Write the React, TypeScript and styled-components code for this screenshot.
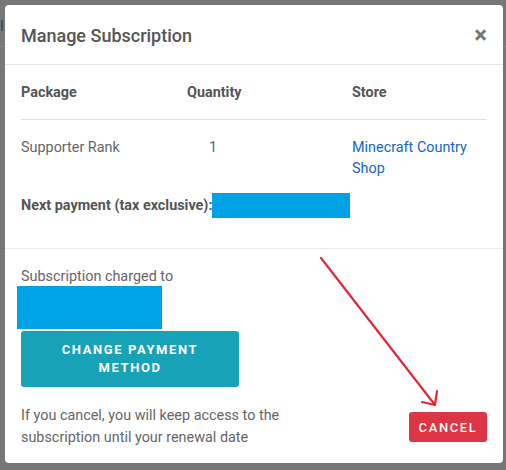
import styled, { createGlobalStyle } from 'styled-components';

const GlobalStyle = createGlobalStyle`
  html, body {
    margin: 0;
    background: #777777;
    font-family: Roboto, "Noto Sans", "Liberation Sans", sans-serif;
  }
`;

const rows = [{ name: 'Supporter Rank', quantity: 1, store: 'Minecraft Country Shop' }];

const App = () => (
  <>
    <GlobalStyle />
    <Overlay>
      <PageHint>li</PageHint>
      <Modal>
        <Header>
          <Title>Manage Subscription</Title>
          <Close aria-label="Close">×</Close>
        </Header>
        <Body>
          <Table>
            <thead>
              <tr>
                <Th>Package</Th>
                <Th>Quantity</Th>
                <Th>Store</Th>
              </tr>
            </thead>
            <tbody>
              {rows.map((r) => (
                <tr key={r.name}>
                  <Td>{r.name}</Td>
                  <Td $indent>{r.quantity}</Td>
                  <Td>
                    <StoreLink href="#">{r.store}</StoreLink>
                  </Td>
                </tr>
              ))}
            </tbody>
          </Table>
          <NextPayment>
            Next payment (tax exclusive):
            <Redacted $w={138} $h={25} />
          </NextPayment>
        </Body>
        <Footer>
          <ChargedTo>Subscription charged to</ChargedTo>
          <Redacted $w={145} $h={43} $shift={-4} />
          <ChangeButton>Change payment method</ChangeButton>
          <BottomRow>
            <Notice>
              If you cancel, you will keep access to the
              <br />
              subscription until your renewal date
            </Notice>
            <CancelButton>Cancel</CancelButton>
          </BottomRow>
        </Footer>
        <Arrow width="130" height="160" viewBox="0 0 130 160">
          <path
            d="M2 2 L116 149 M103 146 L116 149 L118 135"
            fill="none"
            stroke="#e3283c"
            strokeWidth="2.2"
            strokeLinecap="round"
            strokeLinejoin="round"
          />
        </Arrow>
      </Modal>
    </Overlay>
  </>
);

export default App;

const Overlay = styled.div`
  position: relative;
  width: 506px;
  height: 470px;
  padding: 5px;
  box-sizing: border-box;
`;

const PageHint = styled.div`
  position: absolute;
  left: 0;
  top: 15px;
  width: 506px;
  height: 31px;
  border-bottom: 1px solid #838383;
  color: #22405e;
  font-size: 15px;
  line-height: 22px;
`;

const Modal = styled.div`
  position: relative;
  width: 498px;
  height: 458px;
  background: #ffffff;
  border-radius: 4px;
  display: flex;
  flex-direction: column;
  color: #666666;
  font-size: 14.4px;
`;

const Header = styled.div`
  box-sizing: border-box;
  flex-shrink: 0;
  height: 60px;
  padding: 1px 16px 0 16px;
  display: flex;
  align-items: center;
  justify-content: space-between;
  border-bottom: 1px solid #e6e6e6;
`;

const Title = styled.h2`
  margin: 0;
  font-size: 18px;
  font-weight: 500;
  color: #555555;
  padding-top: 1px;
`;

const Close = styled.button`
  border: none;
  background: transparent;
  padding: 0;
  font-size: 24px;
  line-height: 1;
  font-weight: 700;
  color: #777777;
  cursor: pointer;
  font-family: inherit;
`;

const Body = styled.div`
  padding: 0 16px 30px;
  border-bottom: 1px solid #ececec;
`;

const Table = styled.table`
  width: 100%;
  border-collapse: collapse;
  table-layout: fixed;

  th:nth-child(1) {
    width: 166px;
  }

  th:nth-child(2) {
    width: 165px;
  }
`;

const Th = styled.th`
  height: 54px;
  text-align: left;
  padding: 0;
  font-weight: 700;
  color: #555555;
  border-bottom: 1px solid #dedede;
`;

const Td = styled.td<{ $indent?: boolean }>`
  vertical-align: top;
  padding: 17px 0 0 ${(p) => (p.$indent ? '22px' : '0')};
  line-height: 21px;
`;

const StoreLink = styled.a`
  color: #1565c8;
  text-decoration: none;
`;

const NextPayment = styled.div`
  margin-top: 14px;
  display: flex;
  align-items: center;
  font-weight: 700;
  color: #555555;
  line-height: 25px;
`;

const Redacted = styled.div<{ $w: number; $h: number; $shift?: number }>`
  width: ${(p) => p.$w}px;
  height: ${(p) => p.$h}px;
  background: #00a2e6;
  margin-left: ${(p) => p.$shift ?? 0}px;
  flex-shrink: 0;
`;

const Footer = styled.div`
  padding: 18px 16px 15px;
  display: flex;
  flex-direction: column;
  align-items: flex-start;
`;

const ChargedTo = styled.div`
  line-height: 19px;
`;

const Notice = styled.div`
  line-height: 22px;
`;

const ChangeButton = styled.button`
  margin-top: 2px;
  width: 218px;
  height: 56px;
  border: none;
  border-radius: 3px;
  background: #17a2b8;
  color: #ffffff;
  font-family: inherit;
  font-size: 13px;
  font-weight: 700;
  letter-spacing: 1.6px;
  line-height: 18px;
  text-transform: uppercase;
  padding: 0 30px;
  cursor: pointer;
`;

const BottomRow = styled.div`
  align-self: stretch;
  margin-top: 18px;
  display: flex;
  align-items: center;
  justify-content: space-between;
`;

const CancelButton = styled.button`
  width: 78px;
  height: 30px;
  border: none;
  border-radius: 3px;
  background: #dc3545;
  color: #ffffff;
  font-family: inherit;
  font-size: 13px;
  font-weight: 500;
  letter-spacing: 1.6px;
  text-transform: uppercase;
  padding: 0;
  cursor: pointer;
`;

const Arrow = styled.svg`
  position: absolute;
  left: 314px;
  top: 251px;
  pointer-events: none;
`;
